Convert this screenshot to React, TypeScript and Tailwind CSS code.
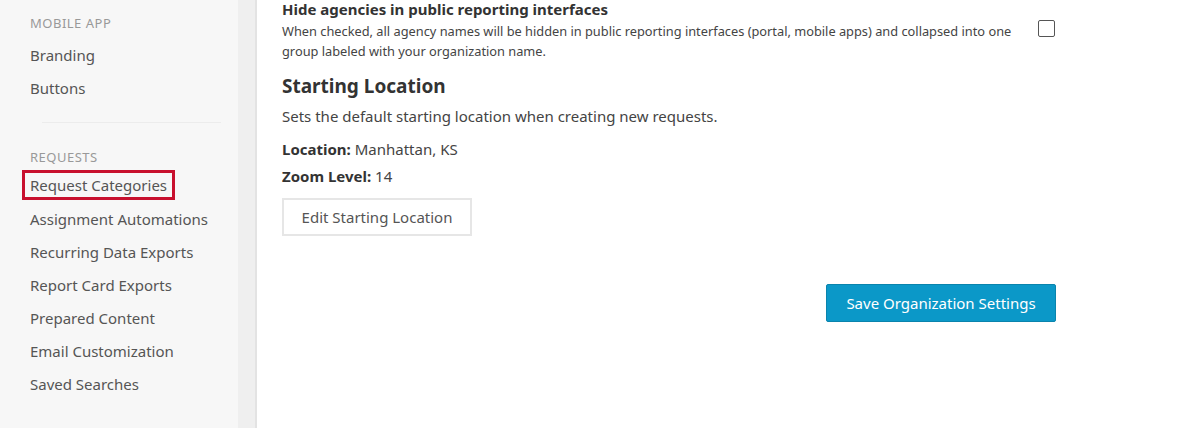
export default function App() {
  const items1 = ["Branding", "Buttons"];
  const items2 = ["Assignment Automations", "Recurring Data Exports", "Report Card Exports", "Prepared Content", "Email Customization", "Saved Searches"];
  return (
    <div className="flex h-[428px] w-[1199px] overflow-hidden bg-white text-[#333]" style={{ fontFamily: '"Noto Sans", "Open Sans", sans-serif' }}>
      <div className="flex w-[257px] shrink-0">
        <div className="w-[238px] bg-[#f7f7f7] pl-[30px] pt-[14px]">
          <div className="text-[13px] tracking-[0.5px] text-[#999] leading-[18px]">MOBILE APP</div>
          <div className="mt-[7px] text-[15px] leading-[33px] text-[#555]">
            {items1.map((t) => <div key={t}>{t}</div>)}
          </div>
          <div className="ml-[12px] mr-[17px] mt-[17px] h-px bg-[#ececec]" />
          <div className="mt-[25px] text-[13px] tracking-[0.5px] text-[#999] leading-[18px]">REQUESTS</div>
          <div className="mt-[4px] text-[15px] leading-[33px] text-[#555]">
            <div className="-ml-[8px] w-fit border-[3px] border-[#c8102e] px-[5px] leading-[24px] my-[3px]">Request Categories</div>
            {items2.map((t) => <div key={t}>{t}</div>)}
          </div>
        </div>
        <div className="w-[17px] bg-[#efefef]" />
        <div className="w-[2px] bg-[#e3e3e3]" />
      </div>
      <div className="w-[799px] pl-[25px]">
        <div className="flex">
          <div className="w-[735px]">
            <div className="text-[15px] font-bold leading-[18px] text-[#333]">Hide agencies in public reporting interfaces</div>
            <div className="mt-[3px] text-[12.8px] leading-[20px] text-[#444]">When checked, all agency names will be hidden in public reporting interfaces (portal, mobile apps) and collapsed into one group labeled with your organization name.</div>
          </div>
          <div className="ml-[21px] mt-[20px] h-[17px] w-[17px] rounded-[2px] border border-[#555] bg-white" />
        </div>
        <div className="mt-[12px] text-[19px] font-bold leading-[26px] text-[#333]">Starting Location</div>
        <div className="mt-[7px] text-[15px] leading-[20px] text-[#444]">Sets the default starting location when creating new requests.</div>
        <div className="mt-[12px] text-[15px] leading-[22px] text-[#444]"><b className="text-[#333]">Location:</b> Manhattan, KS</div>
        <div className="mt-[5px] text-[15px] leading-[22px] text-[#444]"><b className="text-[#333]">Zoom Level:</b> 14</div>
        <button className="mt-[11px] h-[38px] w-[190px] border-2 border-[#e6e6e6] bg-white text-[15px] text-[#555]">Edit Starting Location</button>
        <div className="mt-[48px] flex w-[774px] justify-end">
          <button className="h-[38px] w-[230px] rounded-[2px] border border-[#0a84ad] bg-[#0b98c8] text-[15px] text-white">Save Organization Settings</button>
        </div>
      </div>
    </div>
  );
}
